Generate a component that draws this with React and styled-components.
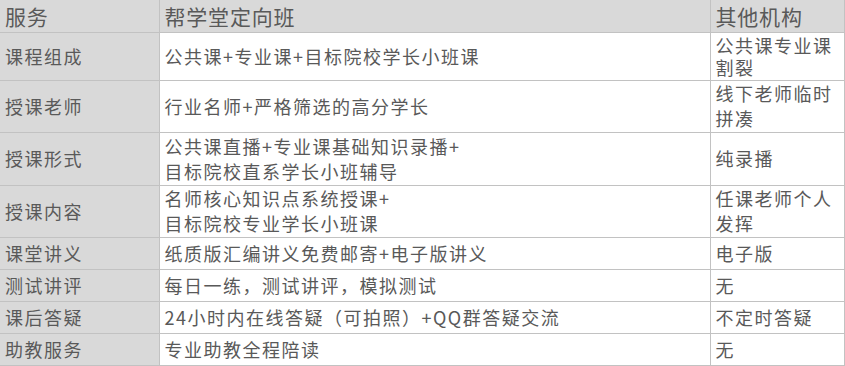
import React from "react";
import styled, { createGlobalStyle } from "styled-components";

const Global = createGlobalStyle`
  html, body { margin: 0; padding: 0; background: #ffffff; }
  body { font-family: "Noto Sans CJK SC", "Noto Sans", sans-serif; }
`;

const Table = styled.table`
  border-collapse: collapse;
  table-layout: fixed;
  width: 844px;
  color: #595959;
`;

const Col = styled.col`
  width: ${(p) => p.$w}px;
`;

const Row = styled.tr`
  height: ${(p) => p.$h}px;
`;

const HeadCell = styled.th`
  background: #d9d9d9;
  font-weight: normal;
  font-size: 21px;
  letter-spacing: 0.8px;
  line-height: 24px;
  text-align: left;
  padding: 0 5px;
  vertical-align: middle;
  border-bottom: 1px solid #c2c2c2;
  border-left: 1px solid #c2c2c2;
  border-right: 1px solid #c2c2c2;
  &:first-child { border-left: none; }
  white-space: nowrap;
`;

const Cell = styled.td`
  background: ${(p) => (p.$label ? "#d9d9d9" : "#ffffff")};
  font-size: 18px;
  letter-spacing: 1.5px;
  line-height: ${(p) => (p.$tight ? 22 : 25)}px;
  text-align: left;
  padding: 0 5px;
  vertical-align: middle;
  border: 1px solid #c2c2c2;
  &:first-child { border-left: none; }
`;

const rows = [
  { h: 48, tight: true, label: "课程组成", main: ["公共课+专业课+目标院校学长小班课"], other: "公共课专业课割裂" },
  { h: 52, label: "授课老师", main: ["行业名师+严格筛选的高分学长"], other: "线下老师临时拼凑" },
  { h: 53, label: "授课形式", main: ["公共课直播+专业课基础知识录播+", "目标院校直系学长小班辅导"], other: "纯录播" },
  { h: 52, label: "授课内容", main: ["名师核心知识点系统授课+", "目标院校专业学长小班课"], other: "任课老师个人发挥" },
  { h: 32, label: "课堂讲义", main: ["纸质版汇编讲义免费邮寄+电子版讲义"], other: "电子版" },
  { h: 32, label: "测试讲评", main: ["每日一练，测试讲评，模拟测试"], other: "无" },
  { h: 32, label: "课后答疑", main: ["24小时内在线答疑（可拍照）+QQ群答疑交流"], other: "不定时答疑" },
  { h: 32, label: "助教服务", main: ["专业助教全程陪读"], other: "无" },
];

export default function App() {
  return (
    <>
      <Global />
      <Table>
        <colgroup>
          <Col $w={159} />
          <Col $w={551} />
          <Col $w={134} />
        </colgroup>
        <thead>
          <Row $h={32}>
            <HeadCell>服务</HeadCell>
            <HeadCell>帮学堂定向班</HeadCell>
            <HeadCell>其他机构</HeadCell>
          </Row>
        </thead>
        <tbody>
          {rows.map((r) => (
            <Row key={r.label} $h={r.h}>
              <Cell $label>{r.label}</Cell>
              <Cell>
                {r.main.map((line, i) => (
                  <React.Fragment key={i}>
                    {i > 0 && <br />}
                    {line}
                  </React.Fragment>
                ))}
              </Cell>
              <Cell $tight={r.tight}>{r.other}</Cell>
            </Row>
          ))}
        </tbody>
      </Table>
    </>
  );
}
